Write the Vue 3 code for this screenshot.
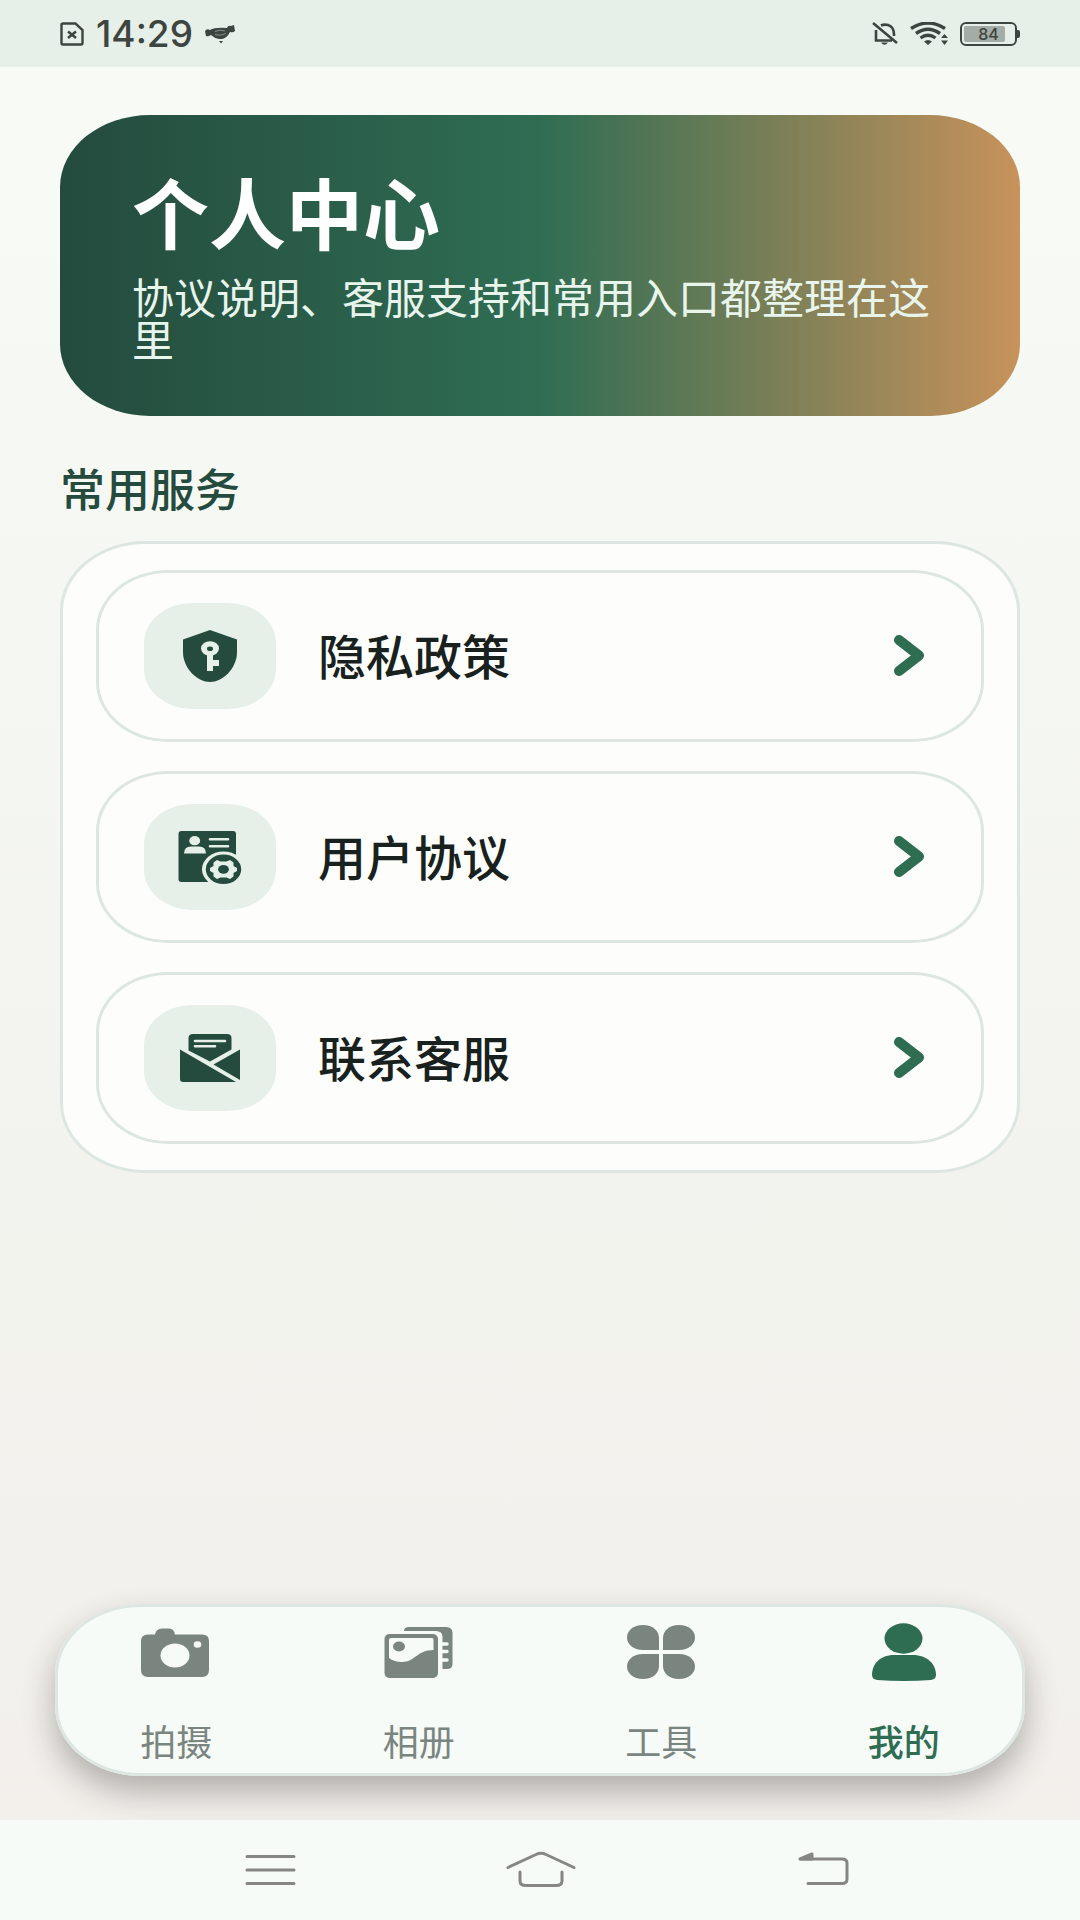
<template>
  <div class="page">
    <header class="status">
      <div class="status__group">
        <svg class="status__sim" viewBox="0 0 24 24" aria-hidden="true">
          <path d="M3 1.5H15.5L22.5 8V21Q22.5 22.5 21 22.5H3Q1.5 22.5 1.5 21V3Q1.5 1.5 3 1.5Z" fill="none" stroke="currentColor" stroke-width="2.4" />
          <path d="M8 9.5L16 16M16 9.5L8 16" stroke="currentColor" stroke-width="2.6" />
        </svg>
        <span class="status__time">14:29</span>
        <svg class="status__bird" viewBox="0 0 30 20" aria-hidden="true">
          <path d="M0 7Q2 4 5 6Q10 3 22 4Q23 1 26 2L29 1L30 7Q28 9 25 8Q22 14 17 15H14Q9 14 6 11Q3 13 1 12Z" fill="currentColor" />
          <path d="M14 17H18L16 19.500Z" fill="currentColor" />
          <path d="M10 7.500Q15 5 20 7M10 10.500Q15 12.500 21 9.500" fill="none" stroke="#87908a" stroke-width="1" />
        </svg>
      </div>
      <div class="status__group status__group--right">
        <svg class="status__bell" viewBox="0 0 26 24" aria-hidden="true">
          <path d="M4 8V18.500H20M9 3.500Q12 2 16 3Q22 5 22 12V14" fill="none" stroke="currentColor" stroke-width="2.6" />
          <path d="M9 20.500H16Q12.500 25 9 20.500Z" fill="currentColor" />
          <path d="M1 1L25 21" stroke="currentColor" stroke-width="2.6" />
        </svg>
        <svg class="status__wifi" viewBox="0 0 38 24" aria-hidden="true">
          <path d="M1 6.500Q18 -4.500 35 6.500M6 11.500Q18 3 30 11.500M10.500 16Q18 10.500 25.500 16" fill="none" stroke="currentColor" stroke-width="3.4" />
          <path d="M14 19.500Q18 16.500 22 19.500L18 23Z" fill="currentColor" />
          <path d="M31 16L34.500 12L38 16ZM31 18.500H38L34.500 23Z" fill="currentColor" />
        </svg>
        <div class="battery">
          <span class="battery__level" :style="{ width: battery + '%' }"></span>
          <span class="battery__text">{{ battery }}</span>
        </div>
      </div>
    </header>

    <main class="content">
      <section class="hero">
        <h1 class="hero__title">个人中心</h1>
        <p class="hero__text">协议说明、客服支持和常用入口都整理在这里</p>
      </section>

      <h2 class="section-title">常用服务</h2>

      <div class="services">
        <button v-for="item in services" :key="item.id" type="button" class="service">
          <span class="service__icon">
            <svg v-if="item.id === 'privacy'" viewBox="0 0 72 60" aria-hidden="true">
              <path d="M36 4L63 13.500V26C63 43 48 56 36 56C24 56 9 43 9 26V13.500Z" fill="currentColor" />
              <ellipse cx="36" cy="22.500" rx="9" ry="7.300" class="cut" />
              <path d="M33 27H39V34H45V40H39V45H33Z" class="cut" />
              <ellipse cx="36" cy="22.700" rx="3" ry="2.300" fill="currentColor" />
            </svg>
            <svg v-else-if="item.id === 'terms'" viewBox="0 0 72 60" aria-hidden="true">
              <rect x="4.500" y="4" width="57.500" height="51" rx="3" fill="currentColor" />
              <ellipse cx="20.700" cy="13.700" rx="5.500" ry="4.600" class="cut" />
              <path d="M10 26.500Q10 19.500 17 19.500H25Q32 19.500 32 26.500Z" class="cut" />
              <path d="M36 12.300H54M36 19.300H54" class="cut-line" />
              <ellipse cx="49.500" cy="42.300" rx="21.500" ry="17.800" class="cut" />
              <ellipse cx="49.500" cy="42.300" rx="17.700" ry="14.700" fill="currentColor" />
              <path d="M43 33L46.500 34.500H52.500L56 33L59.500 35.500L59.500 39L63 41V44L59.500 46L59.500 49.500L56 52L52.500 50.500H46.500L43 52L39.500 49.500L39.500 46L36 44V41L39.500 39L39.500 35.500Z" class="cut" />
              <ellipse cx="49.500" cy="42.300" rx="5.400" ry="4.400" fill="currentColor" />
            </svg>
            <svg v-else viewBox="0 0 72 60" aria-hidden="true">
              <path d="M14.500 22.500V10Q14.500 6 19 6H53Q57.500 6 57.500 10V21.500L36 33.500Z" fill="currentColor" />
              <path d="M21 13H51M21 18.300H41" class="cut-line" />
              <path d="M6 21.500L62 54H9Q6 54 6 51ZM66 21.500V52L39.500 36.500Z" fill="currentColor" />
            </svg>
          </span>
          <span class="service__label">{{ item.label }}</span>
          <svg class="service__arrow" viewBox="0 0 32 42" aria-hidden="true">
            <path d="M6 5L26 20.500L6 36" fill="none" stroke="currentColor" stroke-width="10" stroke-linecap="round" stroke-linejoin="round" />
          </svg>
        </button>
      </div>
    </main>

    <nav class="tabs">
      <button
        v-for="tab in tabs"
        :key="tab.id"
        type="button"
        class="tab"
        :class="{ active: activeTab === tab.id }"
        @click="activeTab = tab.id"
      >
        <svg class="tab__icon" viewBox="0 0 84 72" aria-hidden="true">
          <template v-if="tab.id === 'camera'">
            <path d="M14 18.500H21Q22 12.500 28 12.500H35Q40 12.500 41 18.500H68Q75 18.500 75 25V54Q75 61 68 61H14Q7 61 7 54V25Q7 18.500 14 18.500Z" fill="currentColor" />
            <ellipse cx="41" cy="39.500" rx="14.500" ry="12" class="hole" />
            <ellipse cx="63.500" cy="28.500" rx="3.800" ry="3.200" class="hole" />
          </template>
          <template v-else-if="tab.id === 'album'">
            <path d="M27 15Q27 11 32 11H69Q75.500 11 75.500 17V48Q75.500 53 70 53H65.500V21Q65.500 15 59 15Z" fill="currentColor" />
            <path d="M65 28H70M65 35.500H70M65 44H70" class="hole-line" />
            <rect x="7.500" y="18" width="53.500" height="44" rx="5" fill="currentColor" />
            <path d="M14 22H55Q56.500 22 56.500 24V34C40 34 38 46 25 46Q17 46 12 42V24Q12 22 14 22Z" class="hole" />
            <ellipse cx="22" cy="30.500" rx="6" ry="5" fill="currentColor" />
          </template>
          <template v-else-if="tab.id === 'tools'">
            <path d="M24 9C34 9 40 15 40 22V34H24C14 34 8 28 8 21.500S14 9 24 9Z" fill="currentColor" />
            <path d="M60 9C50 9 44 15 44 22V34H60C70 34 76 28 76 21.500S70 9 60 9Z" fill="currentColor" />
            <path d="M24 63C34 63 40 57 40 50V38H24C14 38 8 44 8 50.500S14 63 24 63Z" fill="currentColor" />
            <path d="M60 63C50 63 44 57 44 50V38H60C70 38 76 44 76 50.500S70 63 60 63Z" fill="currentColor" />
          </template>
          <template v-else>
            <ellipse cx="41.500" cy="22.500" rx="19" ry="15.200" fill="currentColor" />
            <path d="M32 39H51C65 39 74 48 74 59Q74 63 69 64Q42 66 15 64Q10 63 10 59C10 48 18 39 32 39Z" fill="currentColor" />
          </template>
        </svg>
        <span class="tab__label">{{ tab.label }}</span>
      </button>
    </nav>

    <footer class="system">
      <button type="button" class="system__button" aria-label="菜单">
        <svg viewBox="0 0 84 40" aria-hidden="true">
          <path d="M19 6.500H66M19 20H66M19 33.500H66" />
        </svg>
      </button>
      <button type="button" class="system__button" aria-label="主页">
        <svg viewBox="0 0 84 40" aria-hidden="true">
          <path d="M10 17.500L38 4.500Q43 2 48 4.500L76 17.500M22 22V31Q22 35.500 28 35.500H58Q64 35.500 64 31V22" />
        </svg>
      </button>
      <button type="button" class="system__button" aria-label="返回">
        <svg viewBox="0 0 84 40" aria-hidden="true">
          <path d="M33 9H74Q79 9 79 13V29Q79 33.500 74 33.500H40" />
          <path d="M32 9L44 4V9Z" fill="currentColor" />
        </svg>
      </button>
    </footer>
  </div>
</template>

<script setup>
import { ref } from "vue";

const battery = 84;
const activeTab = ref("mine");

const services = [
  { id: "privacy", label: "隐私政策" },
  { id: "terms", label: "用户协议" },
  { id: "support", label: "联系客服" },
];

const tabs = [
  { id: "camera", label: "拍摄" },
  { id: "album", label: "相册" },
  { id: "tools", label: "工具" },
  { id: "mine", label: "我的" },
];
</script>

<style>
body {
  margin: 0;
}
</style>

<style scoped>
.page {
  display: flex;
  flex-direction: column;
  min-height: 100vh;
  background: linear-gradient(#f8fbf6 0%, #f3f4ef 55%, #f2efeb 100%);
  font-family: "Noto Sans CJK SC", sans-serif;
}

button {
  border: none;
  padding: 0;
  background: none;
  font-family: inherit;
  cursor: pointer;
}

.status {
  display: flex;
  justify-content: space-between;
  align-items: center;
  height: 67px;
  padding: 0 60px;
  background: #e6f0e9;
  color: #3d4540;
}

.status__group {
  display: flex;
  align-items: center;
  gap: 12px;
}

.status__group--right {
  margin-right: 3px;
}

.status__sim {
  width: 24px;
  height: 24px;
}

.status__time {
  font-family: Inter, sans-serif;
  font-weight: 500;
  font-size: 37px;
  line-height: 40px;
}

.status__bird {
  width: 30px;
  height: 20px;
}

.status__bell {
  width: 26px;
  height: 24px;
}

.status__wifi {
  width: 38px;
  height: 24px;
}

.battery {
  position: relative;
  box-sizing: border-box;
  width: 57px;
  height: 24px;
  border: 2px solid currentColor;
  border-radius: 6px;
  padding: 2px;
}

.battery::after {
  content: "";
  position: absolute;
  top: 6px;
  right: -5px;
  width: 3px;
  height: 8px;
  border-radius: 0 2px 2px 0;
  background: currentColor;
}

.battery__level {
  display: block;
  height: 100%;
  border-radius: 2px;
  background: #a3aca6;
}

.battery__text {
  position: absolute;
  inset: 0;
  font-family: Inter, sans-serif;
  font-weight: 500;
  font-size: 16px;
  line-height: 20px;
  text-align: center;
}

.content {
  padding: 48px 60px;
}

.hero {
  box-sizing: border-box;
  min-height: 301px;
  padding: 50px 72px;
  border-radius: 90px / 72px;
  background: linear-gradient(90deg, #244b3e 0%, #2f6d53 50%, #c8925b 100%);
}

.hero__title {
  margin: 0 0 18px;
  color: #ffffff;
  font-weight: 700;
  font-size: 77px;
  line-height: 92px;
}

.hero__text {
  margin: 0;
  color: #e8f5ed;
  font-size: 42px;
  line-height: 42px;
}

.section-title {
  margin: 46px 0 27px;
  color: #244b3e;
  font-weight: 500;
  font-size: 45px;
  line-height: 52px;
}

.services {
  display: flex;
  flex-direction: column;
  gap: 29px;
  padding: 26px 33px;
  border: 3px solid #dde6e0;
  border-radius: 86px / 70px;
  background: #fdfefc;
}

.service {
  display: flex;
  align-items: center;
  gap: 42px;
  width: 100%;
  height: 172px;
  padding: 0 56px 0 45px;
  border: 3px solid #dde6e0;
  border-radius: 72px / 60px;
}

.service__icon {
  display: flex;
  align-items: center;
  justify-content: center;
  width: 132px;
  height: 106px;
  border-radius: 48px / 40px;
  background: #e6f0e9;
  color: #244b3e;
}

.service__icon svg {
  width: 72px;
  height: 60px;
}

.cut {
  fill: #e6f0e9;
}

.cut-line {
  stroke: #e6f0e9;
  stroke-width: 2.6;
  stroke-linecap: round;
}

.service__label {
  flex: 1;
  padding-bottom: 4px;
  color: #18211d;
  font-weight: 500;
  font-size: 48px;
  line-height: 56px;
  text-align: left;
}

.service__arrow {
  width: 32px;
  height: 42px;
  color: #2f6d53;
}

.tabs {
  display: flex;
  margin: auto 55px 44px;
  border-radius: 86px / 70px;
  background: #f6fbf7;
  box-shadow: inset 0 0 0 3px #dde6e0, 0 16px 32px rgba(40, 38, 34, 0.32);
}

.tab {
  display: flex;
  flex: 1;
  flex-direction: column;
  align-items: center;
  gap: 34px;
  padding: 12px 0 18px;
  color: #7b857f;
}

.tab__icon {
  width: 84px;
  height: 72px;
}

.tab__label {
  font-size: 36px;
  line-height: 36px;
}

.tab.active {
  color: #2f6d53;
}

.tab.active .tab__label {
  font-weight: 500;
}

.hole {
  fill: #f6fbf7;
}

.hole-line {
  stroke: #f6fbf7;
  stroke-width: 3.4;
  stroke-linecap: round;
}

.system {
  display: flex;
  height: 100px;
  padding: 0 135px;
  background: #f6fbf7;
}

.system__button {
  display: flex;
  flex: 1;
  align-items: center;
  justify-content: center;
  color: #868686;
}

.system__button svg {
  width: 84px;
  height: 40px;
  fill: none;
  stroke: currentColor;
  stroke-width: 3;
  stroke-linecap: round;
  stroke-linejoin: round;
}
</style>
